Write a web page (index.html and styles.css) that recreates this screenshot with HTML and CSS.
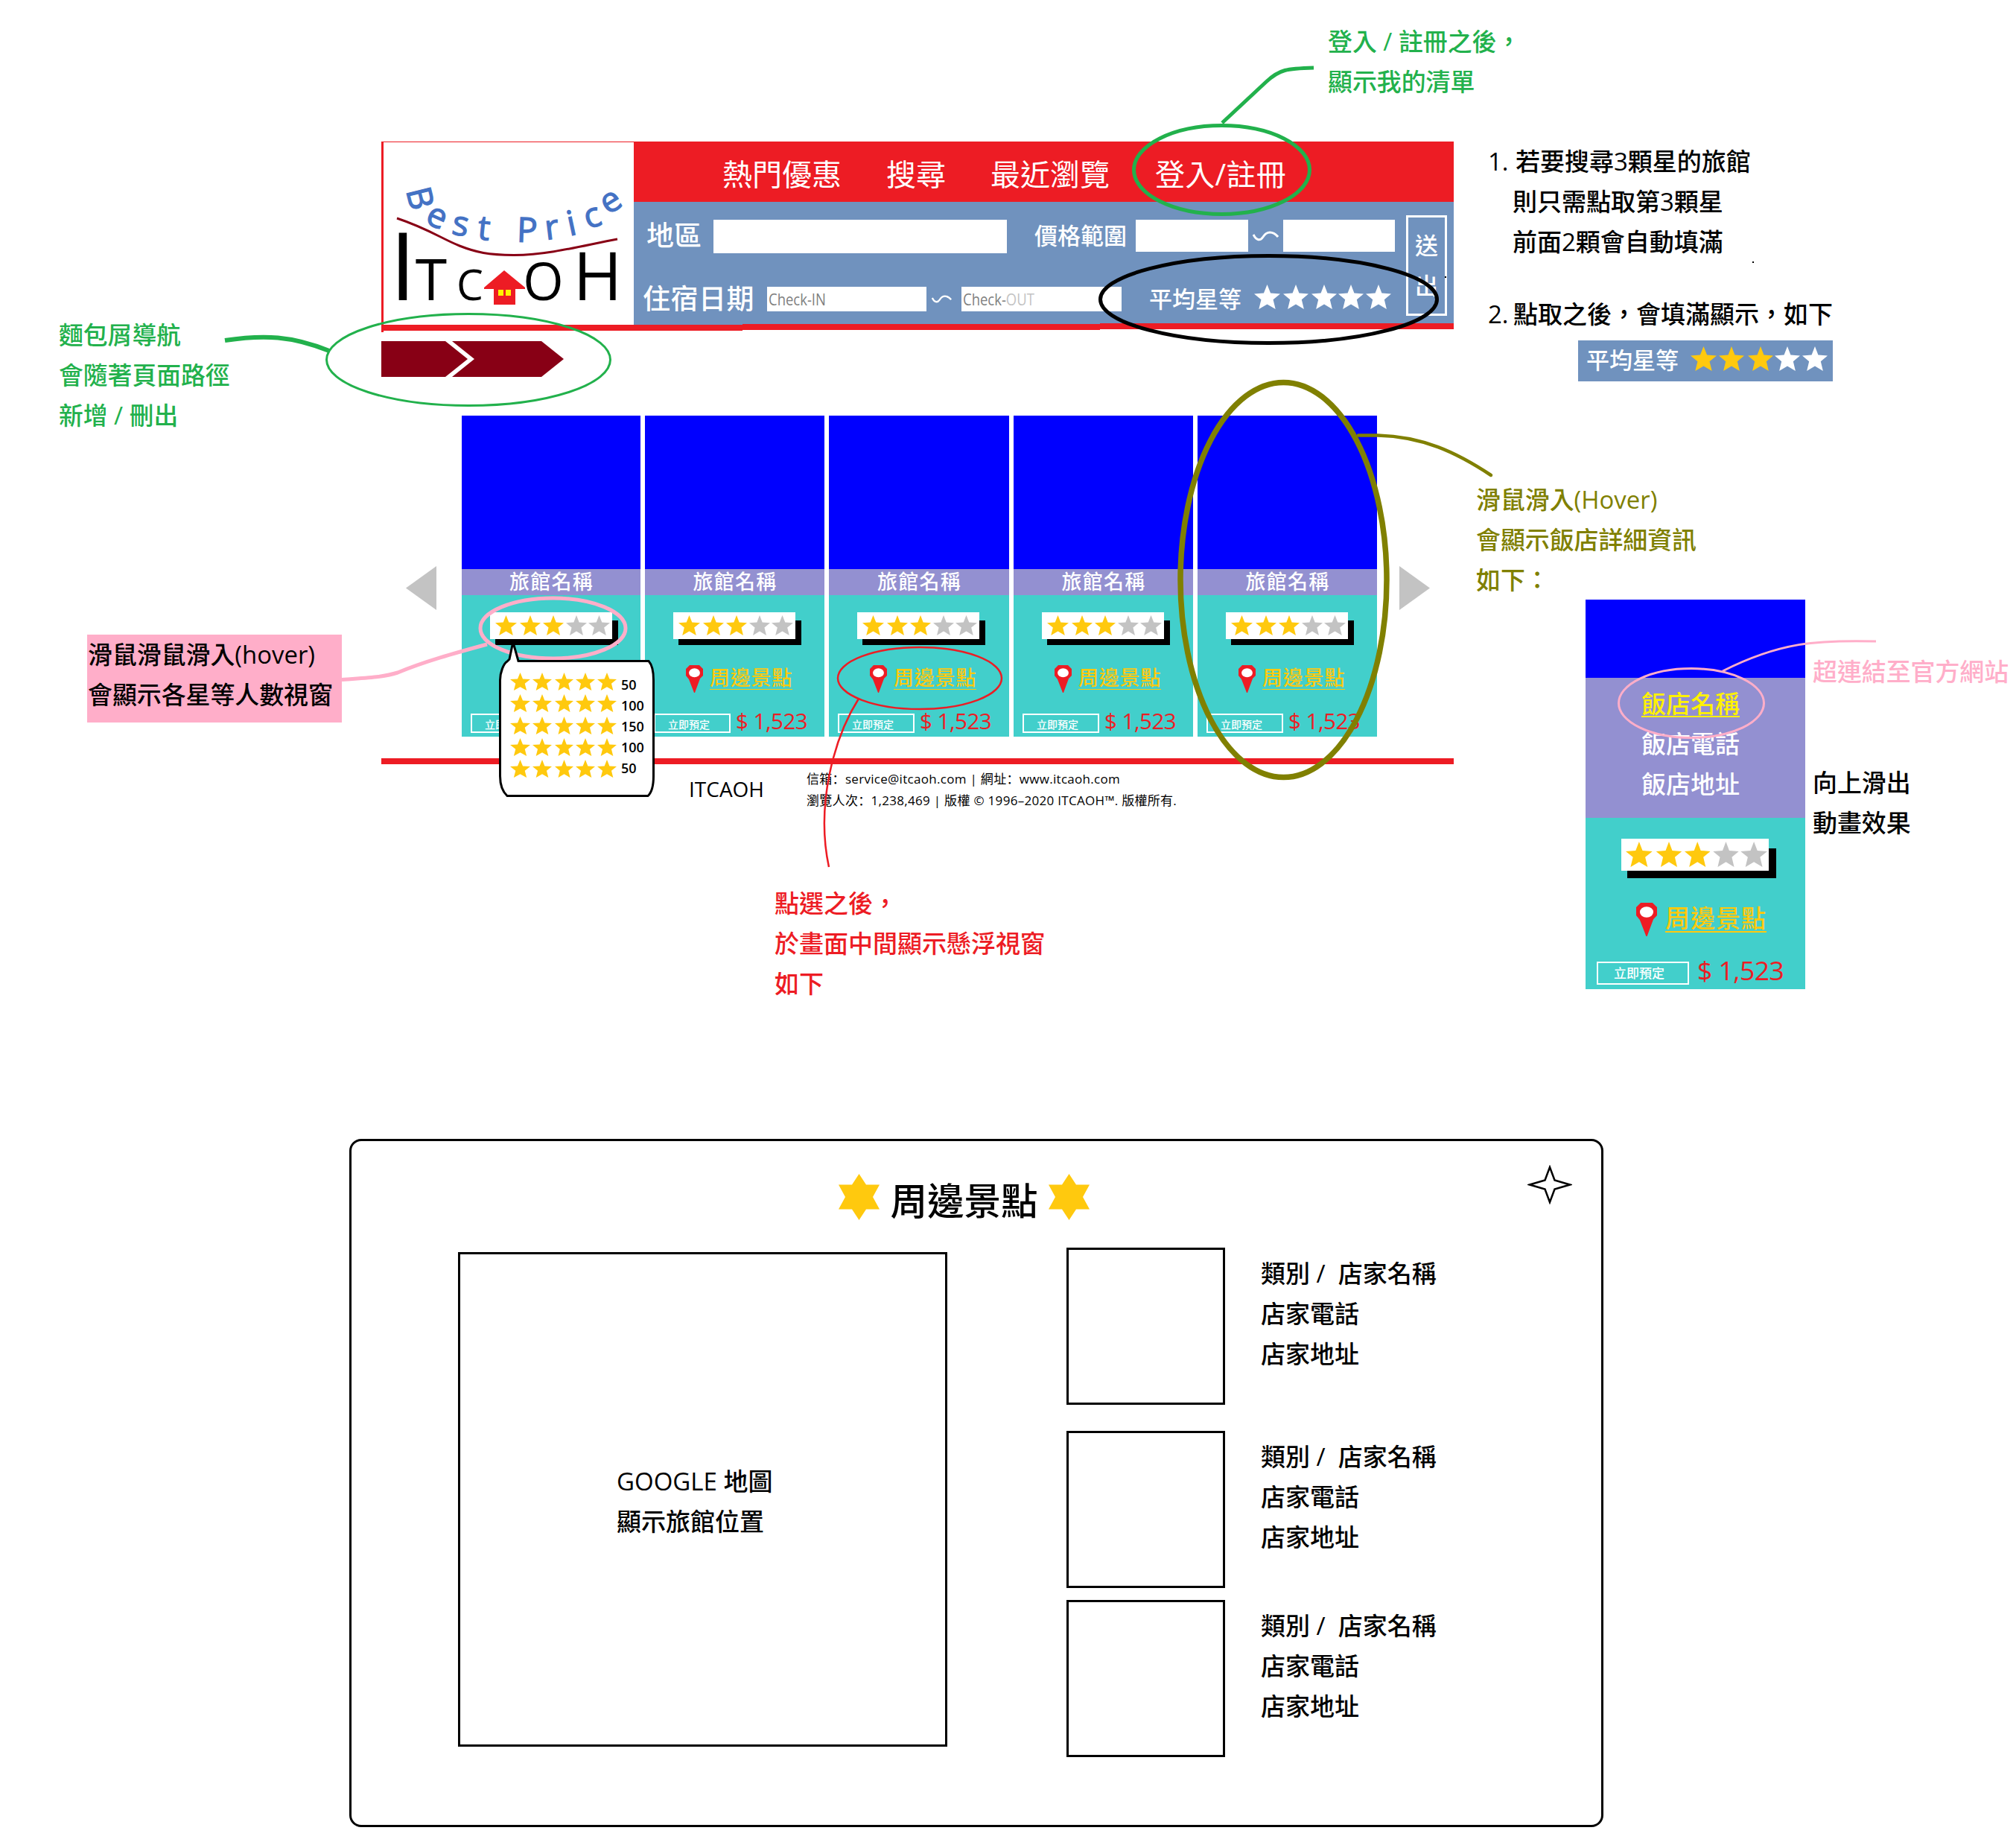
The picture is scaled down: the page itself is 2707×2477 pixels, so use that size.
FILE: index.html
```html
<!DOCTYPE html>
<html lang="zh-Hant">
<head>
<meta charset="utf-8">
<title>ITCAOH</title>
<link rel="stylesheet" href="styles.css">
</head>
<body>
<svg class="defs" width="0" height="0">
  <symbol id="star" viewBox="0 0 100 100" preserveAspectRatio="none"><path d="M50 0L63 35L100 38L73 61L82 100L50 80L18 100L27 61L0 38L37 35Z"/></symbol>
  <symbol id="s5" viewBox="0 0 154 27" preserveAspectRatio="none">
    <use href="#star" x="0" y="0" width="29" height="27" fill="#ffc90e"/><use href="#star" x="33" y="0" width="28" height="27" fill="#ffc90e"/><use href="#star" x="64" y="0" width="28" height="27" fill="#ffc90e"/><use href="#star" x="95" y="0" width="28" height="27" fill="#c3c3c3"/><use href="#star" x="125" y="0" width="29" height="27" fill="#c3c3c3"/>
  </symbol>
  <symbol id="g5" viewBox="0 0 143 24"><g fill="#ffc90e">
    <use href="#star" x="0" y="0" width="27" height="24"/><use href="#star" x="30" y="0" width="26" height="24"/><use href="#star" x="60" y="0" width="25" height="24"/><use href="#star" x="88" y="0" width="26" height="24"/><use href="#star" x="117" y="0" width="26" height="24"/></g>
  </symbol>
  <symbol id="pin" viewBox="0 0 23 37" preserveAspectRatio="none"><path fill="#ed1c24" d="M5 0H18L23 5V14L19 18L12 37H11L4 19L0 14V5Z"/><ellipse cx="11.5" cy="10.3" rx="7.4" ry="6" fill="#fff"/></symbol>
  <symbol id="tilde" viewBox="0 0 35 14"><path d="M1 5C5 13 10 14 14 8C19 0 27 0 34 8" fill="none" stroke="#fff" stroke-width="3"/></symbol>
  <symbol id="hex" viewBox="0 0 55 62"><path fill="#ffc90e" d="M27.500 0L37 14.500H55L46 31L55 47.500H37L27.500 62L18 47.500H0L9 31L0 14.500H18Z"/></symbol>
</svg>
<main class="canvas">

  <section class="site">
    <header class="header">
      <div class="top">
        <div class="logo">
          <svg width="336" height="245" viewBox="515 191 336 245">
            <g class="best">
              <text transform="translate(564 266) rotate(76)" y="16">B</text>
              <text transform="translate(586 293) rotate(24)" y="12">e</text>
              <text transform="translate(618 304) rotate(10)" y="12">s</text>
              <text transform="translate(650 307) rotate(6)" y="15">t</text>
              <text transform="translate(708 308) rotate(2)" y="17">P</text>
              <text transform="translate(741 308) rotate(-7)" y="13">r</text>
              <text transform="translate(767 299) rotate(-12)" y="17">i</text>
              <text transform="translate(796 293) rotate(-18)" y="12">c</text>
              <text transform="translate(821 272) rotate(-32)" y="12">e</text>
            </g>
            <path d="M533 293C575 307 592 320 617 330C640 339 655 342 690 342.500C740 342 785 329 829 321" fill="none" stroke="#880015" stroke-width="3"/>
            <g class="brand">
              <text x="541" y="403" font-size="127">I</text>
              <text x="579" y="403" font-size="77">T</text>
              <text x="631" y="403" font-size="57">C</text>
              <text x="729.500" y="403" font-size="70">O</text>
              <text x="802.500" y="403" font-size="89">H</text>
            </g>
            <path fill="#ed1c24" d="M677 363L705 386V388H692V409H663V388H650V386Z"/>
            <path fill="#fff200" d="M669 389h7v8h-7zM679 389h7v8h-7z"/>
          </svg>
        </div>
        <div class="panel">
          <nav class="nav"><span>熱門優惠</span><span>搜尋</span><span>最近瀏覽</span><span class="login">登入/註冊</span></nav>
          <div class="search">
            <div class="fields">
              <div class="row row-a">
                <label class="big">地區</label><div class="input area"></div>
                <label class="mid price-label">價格範圍</label><div class="input p1"></div>
                <svg class="tilde" width="47" height="43" viewBox="0 0 47 43"><use href="#tilde" x="6" y="15" width="35" height="14"/></svg>
                <div class="input p2"></div>
              </div>
              <div class="row row-b">
                <label class="big stay">住宿日期</label><div class="input date"><span>Check-IN</span></div>
                <svg width="47" height="33" viewBox="0 0 47 33"><use href="#tilde" x="7" y="11" width="27" height="11"/></svg>
                <div class="input date out"><span>Check-<i>OUT</i></span></div>
                <label class="mid avg">平均星等</label>
                <svg class="white-stars" width="184" height="33" fill="#fff"><use href="#star" x="0" width="35" height="33"/><use href="#star" x="39" width="34" height="33"/><use href="#star" x="77" width="34" height="33"/><use href="#star" x="113" width="34" height="33"/><use href="#star" x="150" width="34" height="33"/></svg>
              </div>
            </div>
            <div class="submit"><span>送</span><span>出</span></div>
          </div>
        </div>
      </div>
      <div class="bars"><b></b><b></b><b></b></div>
    </header>

    <svg class="crumbs" width="246" height="48" fill="#880015"><path d="M0 0H86L116 24L86 48H0Z"/><path d="M95 0H215L245 24L215 48H95L125 24Z"/></svg>

    <div class="carousel">
      <svg class="arrow" width="41" height="59"><path d="M41 0V59L0 29.500Z" fill="#c3c3c3"/></svg>
      <div class="cards">
        <article class="card"><div class="photo"></div><h3>旅館名稱</h3><div class="info">
          <div class="rating"><svg><use href="#s5"/></svg></div>
          <div class="place"><svg><use href="#pin"/></svg><a>周邊景點</a></div>
          <div class="book"><span class="btn">立即預定</span><span class="cost">$ 1,523</span></div></div></article>
        <article class="card"><div class="photo"></div><h3>旅館名稱</h3><div class="info">
          <div class="rating"><svg><use href="#s5"/></svg></div>
          <div class="place"><svg><use href="#pin"/></svg><a>周邊景點</a></div>
          <div class="book"><span class="btn">立即預定</span><span class="cost">$ 1,523</span></div></div></article>
        <article class="card"><div class="photo"></div><h3>旅館名稱</h3><div class="info">
          <div class="rating"><svg><use href="#s5"/></svg></div>
          <div class="place"><svg><use href="#pin"/></svg><a>周邊景點</a></div>
          <div class="book"><span class="btn">立即預定</span><span class="cost">$ 1,523</span></div></div></article>
        <article class="card"><div class="photo"></div><h3>旅館名稱</h3><div class="info">
          <div class="rating"><svg><use href="#s5"/></svg></div>
          <div class="place"><svg><use href="#pin"/></svg><a>周邊景點</a></div>
          <div class="book"><span class="btn">立即預定</span><span class="cost">$ 1,523</span></div></div></article>
        <article class="card"><div class="photo"></div><h3>旅館名稱</h3><div class="info">
          <div class="rating"><svg><use href="#s5"/></svg></div>
          <div class="place"><svg><use href="#pin"/></svg><a>周邊景點</a></div>
          <div class="book"><span class="btn">立即預定</span><span class="cost">$ 1,523</span></div></div></article>
      </div>
      <svg class="arrow" width="41" height="59"><path d="M0 0V59L41 29.500Z" fill="#c3c3c3"/></svg>
    </div>

    <footer class="footer">
      <span class="name">ITCAOH</span>
      <div class="legal" lang="zh-Hans"><p class="l1">信箱：service@itcaoh.com | 網址：www.itcaoh.com</p><p class="l2">瀏覽人次：1,238,469 | 版權 © 1996–2020 ITCAOH™. 版權所有.</p></div>
    </footer>
  </section>

  <p class="note green n-login">登入 / 註冊之後，<br>顯示我的清單</p>
  <p class="note green n-crumb">麵包屑導航<br>會隨著頁面路徑<br>新增 / 刪出</p>
  <p class="note n-hover">滑鼠滑鼠滑入(hover)<br>會顯示各星等人數視窗</p>
  <p class="note red n-click">點選之後，<br>於畫面中間顯示懸浮視窗<br>如下</p>
  <p class="note olive n-card">滑鼠滑入(Hover)<br>會顯示飯店詳細資訊<br>如下：</p>
  <p class="note pink n-link">超連結至官方網站</p>
  <p class="note n-slide">向上滑出<br>動畫效果</p>

  <section class="note n-search">
    <div class="item"><span>1.</span><p>若要搜尋3顆星的旅館</p></div>
    <p class="cont">則只需點取第3顆星<br>前面2顆會自動填滿</p>
    <div class="item second"><span>2.</span><p>點取之後，會填滿顯示，如下</p></div>
    <div class="chip"><span>平均星等</span><svg width="184" height="33" fill="#ffc90e"><use href="#star" x="0" width="35" height="33"/><use href="#star" x="38" width="34" height="33"/><use href="#star" x="77" width="34" height="33"/><use href="#star" x="113" width="34" height="33" fill="#fff"/><use href="#star" x="150" width="34" height="33" fill="#fff"/></svg></div>
  </section>

  <article class="card detail">
    <div class="photo"></div>
    <div class="contact"><a>飯店名稱</a><span>飯店電話</span><span>飯店地址</span></div>
    <div class="info">
      <div class="rating"><svg><use href="#s5"/></svg></div>
      <div class="place"><svg><use href="#pin"/></svg><a>周邊景點</a></div>
      <div class="book"><span class="btn">立即預定</span><span class="cost">$ 1,523</span></div>
    </div>
  </article>

  <svg class="marks" width="2707" height="2477" fill="none">
    <g stroke="#22b14c">
      <ellipse cx="1640.500" cy="228" rx="118" ry="59.500" stroke-width="5"/>
      <path d="M1641 165L1700 110C1718 93 1728 92 1764 91" stroke-width="5"/>
      <ellipse cx="629" cy="483" rx="190.500" ry="61.500" stroke-width="3"/>
      <path d="M302 457C355 449 392 451 442 471" stroke-width="6"/>
    </g>
    <ellipse cx="1703.500" cy="402" rx="226" ry="58.500" stroke="#000" stroke-width="5"/>
    <path d="M1940 371h2v2h-2zM2353 351h2v2h-2z" fill="#000"/>
    <g stroke="#ffaec9">
      <ellipse cx="742.500" cy="843.500" rx="97.500" ry="40.500" stroke-width="5"/>
      <path d="M459 912.500C495 910 515 909 534 903C570 888 610 877 654 865" stroke-width="5"/>
      <ellipse cx="2271" cy="944" rx="97.500" ry="46.500" stroke-width="3"/>
      <path d="M2313 901C2390 862 2440 859 2519 861" stroke-width="3"/>
    </g>
    <g stroke="#ed1c24" stroke-width="2.500">
      <ellipse cx="1235" cy="910.500" rx="110" ry="41.500"/>
      <path d="M1153 938C1120 990 1095 1080 1113 1164"/>
    </g>
    <g stroke="#808000">
      <ellipse cx="1723.500" cy="778.500" rx="138.500" ry="265" stroke-width="7.500"/>
      <path d="M1824 584.500H1850C1910 586 1955 607 2002 638" stroke-width="4.500" stroke-linecap="round"/>
    </g>
  </svg>

  <aside class="popup">
    <svg class="shape" width="213" height="208" viewBox="668 863 213 208"><path d="M681 888L684 885L688 866H690L696 887.500H871C876 893 877.500 905 877.500 913V1042C877.500 1053 875 1064 870 1068.500H681C674 1062 671.500 1052 671.500 1042V913C671.500 903 676 891 681 888Z" fill="#fff" stroke="#000" stroke-width="3"/></svg>
    <div class="levels"><svg><use href="#g5"/></svg><svg><use href="#g5"/></svg><svg><use href="#g5"/></svg><svg><use href="#g5"/></svg><svg><use href="#g5"/></svg></div>
    <div class="counts"><span>50</span><span>100</span><span>150</span><span>100</span><span>50</span></div>
  </aside>

  <section class="modal">
    <div class="head">
      <svg width="55" height="62"><use href="#hex"/></svg><h2>周邊景點</h2><svg width="55" height="62"><use href="#hex"/></svg>
      <svg class="close" width="60" height="53"><path d="M30 3L36.500 20.500L57 26.500L36.500 32.500L30 50L23.500 32.500L3 26.500L23.500 20.500Z" fill="none" stroke="#000" stroke-width="2.500"/></svg>
    </div>
    <div class="body">
      <div class="map">GOOGLE 地圖<br>顯示旅館位置</div>
      <div class="shops">
        <div class="shop"><div class="thumb"></div><p>類別 /&nbsp; 店家名稱<br>店家電話<br>店家地址</p></div>
        <div class="shop"><div class="thumb"></div><p>類別 /&nbsp; 店家名稱<br>店家電話<br>店家地址</p></div>
        <div class="shop"><div class="thumb"></div><p>類別 /&nbsp; 店家名稱<br>店家電話<br>店家地址</p></div>
      </div>
    </div>
  </section>
</main>
</body>
</html>
```
FILE: styles.css
```css
* { box-sizing: border-box; }
body { margin: 0; background: #fff; color: #000; font-family: "Open Sans", "Noto Sans CJK TC", sans-serif; }
p, h2, h3 { margin: 0; font-weight: inherit; }
svg { display: block; flex: none; }
.defs { position: absolute; }
.canvas { position: relative; width: 2707px; height: 2477px; overflow: hidden; }

/* hotel site wireframe */
.site { position: absolute; left: 512px; top: 190px; width: 1440px; }
.header { height: 256px; border-left: 3px solid #ed1c24; }
.top { display: flex; height: 246px; }
.logo { width: 336px; border-top: 1px solid #ed1c24; }
.logo svg { overflow: visible; }
.best { font-size: 46px; fill: #4472c4; stroke: #4472c4; stroke-width: 1.2px; text-anchor: middle; }
.brand { text-anchor: middle; }
.panel { flex: 1; display: flex; flex-direction: column; }
.nav { height: 81px; padding: 6px 0 0 119px; display: flex; align-items: center; gap: 60px; background: #ed1c24; color: #fff; font-size: 40px; line-height: 60px; white-space: nowrap; }
.login { padding-left: 1px; letter-spacing: .3px; }
.search { flex: 1; display: flex; background: #7092be; color: #fff; }
.fields { width: 1022px; padding-top: 24px; }
.row { display: flex; }
.row-a { height: 45px; padding-left: 17px; }
.row-b { height: 40px; margin-top: 41px; padding-left: 12px; align-items: center; }
.big { font-size: 37px; line-height: 42px; white-space: nowrap; font-weight: 500; }
.mid { font-size: 31px; line-height: 43px; white-space: nowrap; font-weight: 500; }
.input { background: #fff; flex: none; }
.area { width: 394px; height: 45px; margin-left: 16px; }
.price-label { margin-left: 37px; width: 124px; }
.p1 { width: 151px; height: 43px; margin-left: 12px; }
.p2 { width: 150px; height: 43px; }
.stay { width: 150px; letter-spacing: .5px; }
.date { width: 214px; height: 33px; margin-left: 17px; padding-left: 2px; color: #7f7f7f; font-size: 22px; line-height: 32px; }
.date.out { width: 215px; margin-left: 0; }
.date span { display: inline-block; transform: scaleX(.84); transform-origin: 0 50%; }
.date i { font-style: normal; color: #c3c3c3; }
.avg { margin-left: 37px; width: 125px; line-height: 36px; }
.white-stars { margin: -6px 0 0 16px; }
.submit { width: 55px; height: 135px; margin: 18px 0 0 15px; border: 3px solid #fff; padding-top: 10px; display: flex; flex-direction: column; align-items: center; font-size: 31px; line-height: 54px; font-weight: 500; }
.bars { display: flex; height: 8px; margin-right: 0; }
.bars b { height: 8px; background: #ed1c24; width: 482px; }
.bars b:nth-child(2) { width: 480px; margin-top: -1px; }
.bars b:nth-child(3) { width: 475px; margin-top: -2px; }
.crumbs { margin-top: 12px; }

.carousel { display: flex; margin: 52px 0 29px; padding-left: 33px; }
.arrow { margin-top: 202px; }
.cards { display: grid; grid-template-columns: 240px 241px 242px 241px 241px; gap: 6px; margin: 0 30px 0 34px; }
.card { display: flex; flex-direction: column; }
.photo { height: 206px; background: #00f; }
.card h3 { height: 35px; background: #9390d1; color: #fff; text-align: center; font-size: 27px; line-height: 34px; letter-spacing: 1.2px; padding-left: 1px; font-weight: 500; }
.info { height: 190px; padding: 23px 0 0 38px; background: #42cfcb; }
.rating { position: relative; z-index: 0; width: 164px; height: 36px; }
.rating::before { content: ""; position: absolute; z-index: -1; inset: 11px -8px -8px 7px; background: #000; }
.rating::after { content: ""; position: absolute; z-index: -1; inset: 0; background: #fff; }
.rating svg { width: 154px; height: 27px; position: relative; left: 7px; top: 4px; }
.place { display: flex; margin: 35px 0 0 17px; height: 37px; }
.place svg { width: 23px; height: 37px; margin-right: 9px; }
.place a { height: 33px; border-bottom: 1.5px solid #ffc90e; color: #ffc90e; font-size: 27px; line-height: 34px; letter-spacing: .8px; font-weight: 500; }
.book { display: flex; margin: 28px 0 0 -26px; }
.btn { width: 103px; height: 26px; border: 2.500px solid #fff; color: #fff; font-size: 14px; line-height: 25px; padding-left: 17px; white-space: nowrap; font-weight: 500; }
.cost { margin-left: 7px; color: #ed1c24; font-size: 29.500px; line-height: 20px; white-space: nowrap; letter-spacing: -.5px; font-weight: 500; }

.footer { display: flex; border-top: 8px solid #ed1c24; padding-left: 413px; height: 90px; }
.name { width: 158px; font-size: 28px; line-height: 66px; font-weight: 400; }
.legal { padding-top: 5px; font-family: "Open Sans", "Noto Sans CJK SC", sans-serif; font-size: 17px; line-height: 29px; white-space: nowrap; letter-spacing: .3px; }

/* designer's notes */
.note { position: absolute; font-size: 33px; line-height: 54px; white-space: nowrap; font-weight: 500; }
.green { color: #22b14c; }
.red { color: #ed1c24; }
.olive { color: #808000; }
.pink { color: #ffaec9; }
.n-login { left: 1783px; top: 29px; font-size: 32.900px; }
.n-crumb { left: 79px; top: 423px; font-size: 32.800px; }
.n-hover { left: 117px; top: 852px; width: 342px; height: 118px; padding-left: 1px; font-size: 32.900px; background: #ffaec9; line-height: 53.500px; }
.n-click { left: 1040px; top: 1186px; }
.n-card { left: 1982px; top: 644px; font-size: 32.900px; }
.n-link { left: 2434px; top: 875px; font-size: 32.900px; }
.n-slide { left: 2434px; top: 1024px; font-size: 32.900px; }
.n-search { left: 1998px; top: 190px; width: 463px; }
.item { display: flex; }
.item span { width: 37px; }
.cont { padding-left: 33px; }
.second { margin-top: 43px; }
.chip { display: flex; align-items: center; margin: 8px 0 0 121px; height: 55px; padding: 0 0 4px 11px; background: #7092be; color: #fff; font-size: 31px; }
.chip svg { margin: -2px 0 0 16px; }

/* hovered hotel card */
.detail { position: absolute; left: 2129px; top: 805px; width: 295px; }
.detail .photo { height: 105px; }
.contact { height: 188px; padding: 8px 0 0 75px; background: #9390d1; color: #fff; font-size: 33px; line-height: 54px; font-weight: 500; display: flex; flex-direction: column; align-items: flex-start; }
.contact a { color: #fff200; text-decoration: underline; text-decoration-thickness: 2px; text-underline-offset: 4px; }
.detail .info { height: 230px; padding: 28px 0 0 48px; }
.detail .rating { width: 198px; height: 43px; }
.detail .rating::before { inset: 13px -10px -10px 8px; }
.detail .rating svg { width: 190px; height: 34px; left: 6px; }
.detail .place { margin: 43px 0 0 20px; height: 45px; }
.detail .place svg { width: 28px; height: 45px; margin-right: 11px; }
.detail .place a { height: 40px; font-size: 33px; line-height: 42px; border-width: 2px; letter-spacing: 1px; }
.detail .book { margin: 34px 0 0 -33px; }
.detail .btn { width: 124px; height: 31px; font-size: 17px; line-height: 28px; padding-left: 21px; }
.detail .cost { margin-left: 11px; font-size: 35.500px; line-height: 23px; }

.marks { position: absolute; left: 0; top: 0; }

/* rating breakdown bubble */
.popup { position: absolute; left: 670px; top: 865px; width: 209px; height: 205px; padding: 38px 0 0 15px; display: flex; gap: 6px; }
.shape { position: absolute; left: -2px; top: -2px; }
.levels, .counts { position: relative; display: flex; flex-direction: column; }
.levels { gap: 5.300px; }
.levels svg { width: 143px; height: 24px; }
.counts { margin-top: 2px; font-size: 18px; line-height: 28px; font-weight: 600; }

/* nearby places window */
.modal { position: absolute; left: 469px; top: 1529px; width: 1684px; height: 924px; border: 3px solid #000; border-radius: 16px; }
.head { position: relative; display: flex; align-items: flex-start; height: 149px; padding: 44px 0 0 654px; }
.head h2 { width: 227px; text-align: center; font-size: 49.500px; line-height: 73px; font-weight: 500; }
.close { position: absolute; right: 39px; top: 32px; }
.body { display: flex; padding-left: 143px; font-weight: 500; }
.map { width: 657px; height: 664px; border: 3px solid #000; padding: 278px 0 0 210px; font-size: 33px; line-height: 54px; }
.shops { margin: -6px 0 0 160px; display: grid; grid-template-rows: 246px 227px 212px; }
.shop { display: flex; font-size: 33px; line-height: 54px; }
.thumb { width: 213px; height: 211px; border: 3px solid #000; }
.shop p { padding: 8px 0 0 48px; }
```
